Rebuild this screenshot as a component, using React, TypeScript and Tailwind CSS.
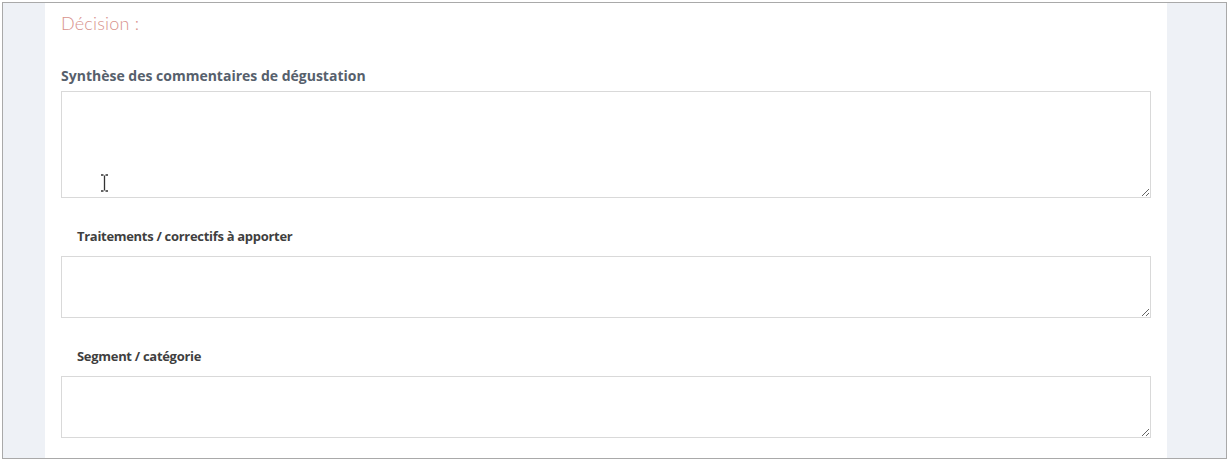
import React from 'react';

const Field: React.FC<{ label: string; height: string; className?: string }> = ({ label, height, className }) => (
  <div className={className}>
    <div className="pl-4 text-[13px] font-bold text-[#3f3f3f] leading-[16px] tracking-[-0.3px]" style={{ fontFamily: '"Open Sans", sans-serif' }}>
      {label}
    </div>
    <textarea className={`mt-[12px] block w-full ${height} border border-[#d9d9d9] bg-white resize-y outline-none`} />
  </div>
);

export default function App() {
  return (
    <div className="w-[1229px] h-[460px] bg-white pt-[2px] pl-[2px]">
      <div className="w-[1225px] h-[457px] border border-[#a9a9a9] flex">
        <div className="w-[42px] bg-[#eef1f6]" />
        <div className="w-[1122px] bg-white px-4 pt-[8px]">
          <div className="text-[18px] font-light text-[#d8928d] leading-[24px] tracking-[0.2px]" style={{ fontFamily: 'Lato, sans-serif' }}>
            Décision :
          </div>
          <div
            className="mt-[33px] text-[14px] font-bold text-[#56606c] leading-[16px]"
            style={{ fontFamily: '"Open Sans", sans-serif' }}
          >
            Synthèse des commentaires de dégustation
          </div>
          <div className="relative mt-[7px]">
            <textarea className="block w-full h-[107px] border border-[#d9d9d9] bg-white resize-y outline-none" />
            <svg className="absolute left-[39px] top-[83px]" width="9" height="18" viewBox="0 0 9 18" fill="none">
              <path d="M1 1h2.5M5.5 1H8M4.5 1.5v15M1 17h2.5M5.5 17H8" stroke="#333" strokeWidth="1.3" />
            </svg>
          </div>
          <Field label="Traitements  / correctifs à apporter" height="h-[62px]" className="mt-[30px]" />
          <Field label="Segment / catégorie" height="h-[62px]" className="mt-[30px]" />
        </div>
        <div className="flex-1 bg-[#eef1f6]" />
      </div>
    </div>
  );
}
